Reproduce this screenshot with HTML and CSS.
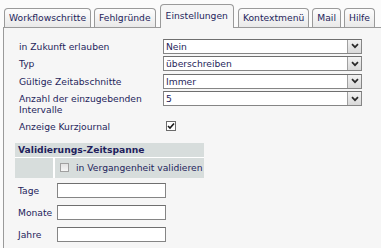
FILE: index.html
```html
<!DOCTYPE html>
<html lang="de">
<head>
    <meta charset="UTF-8">
    <title>Einstellungen</title>
    <link rel="stylesheet" href="styles.css">
</head>
<body>
    <div class="tabs">
        <div class="tab">Workflowschritte</div>
        <div class="tab">Fehlgründe</div>
        <div class="tab active">Einstellungen</div>
        <div class="tab">Kontextmenü</div>
        <div class="tab">Mail</div>
        <div class="tab">Hilfe</div>
    </div>

    <div class="panel">
        <div class="settings">
            <div class="label">in Zukunft erlauben</div>
            <div class="select">
                <span class="value">Nein</span>
                <span class="arrow"><svg width="8" height="6" viewBox="0 0 8 6"><path d="M1 1.2 L4 4.2 L7 1.2" fill="none" stroke="#2a2a2a" stroke-width="1.7"/></svg></span>
            </div>

            <div class="label">Typ</div>
            <div class="select">
                <span class="value">überschreiben</span>
                <span class="arrow"><svg width="8" height="6" viewBox="0 0 8 6"><path d="M1 1.2 L4 4.2 L7 1.2" fill="none" stroke="#2a2a2a" stroke-width="1.7"/></svg></span>
            </div>

            <div class="label">Gültige Zeitabschnitte</div>
            <div class="select">
                <span class="value">Immer</span>
                <span class="arrow"><svg width="8" height="6" viewBox="0 0 8 6"><path d="M1 1.2 L4 4.2 L7 1.2" fill="none" stroke="#2a2a2a" stroke-width="1.7"/></svg></span>
            </div>

            <div class="label">Anzahl der einzugebenden Intervalle</div>
            <div class="select">
                <span class="value">5</span>
                <span class="arrow"><svg width="8" height="6" viewBox="0 0 8 6"><path d="M1 1.2 L4 4.2 L7 1.2" fill="none" stroke="#2a2a2a" stroke-width="1.7"/></svg></span>
            </div>

            <div class="label last">Anzeige Kurzjournal</div>
            <div class="check-cell last">
                <span class="checkbox"><svg width="8" height="8" viewBox="0 0 8 8"><path d="M1 4 L3 6 L7 1.5" fill="none" stroke="#1a1a1a" stroke-width="1.6"/></svg></span>
            </div>
        </div>

        <table class="range">
            <tr>
                <th colspan="2">Validierungs-Zeitspanne</th>
            </tr>
            <tr class="sub">
                <td class="first"></td>
                <td><span class="checkbox disabled"></span>in Vergangenheit validieren</td>
            </tr>
            <tr class="field">
                <td class="first">Tage</td>
                <td><input type="text"></td>
            </tr>
            <tr class="field">
                <td class="first">Monate</td>
                <td><input type="text"></td>
            </tr>
            <tr class="field">
                <td class="first">Jahre</td>
                <td><input type="text"></td>
            </tr>
        </table>
    </div>
</body>
</html>
```

FILE: styles.css
```css
:root {
    --text-color: #1f1f5c;
    --border-color: #9a9a9a;
    --panel-bg: #f6f6f6;
    --head-bg: #d7dddc;
}

* {
    margin: 0;
    padding: 0;
    box-sizing: border-box;
}

body {
    background-color: #fbfbfb;
    color: var(--text-color);
    font-family: 'DejaVu Sans', Verdana, sans-serif;
    font-size: 9.2px;
    line-height: 11px;
    overflow: hidden;
}

/* Tabs */
.tabs {
    display: flex;
    align-items: flex-end;
    gap: 3px;
    height: 28px;
    margin-left: 4px;
    position: relative;
    z-index: 1;
}

.tab {
    height: 19px;
    padding: 3px 4px 0;
    border: 1px solid var(--border-color);
    border-bottom: none;
    border-radius: 4px 4px 0 0;
    background: linear-gradient(#fdfdfd, #e9e9e9);
    margin-bottom: 1px;
    white-space: nowrap;
}

.tab.active {
    height: 24px;
    padding: 5px 5px 0;
    margin: 0 1px;
    background: var(--panel-bg);
}

/* Panel */
.panel {
    margin-left: 3px;
    margin-top: -1px;
    height: 230px;
    border-top: 1px solid var(--border-color);
    border-left: 1px solid var(--border-color);
    background-color: var(--panel-bg);
}

.settings {
    display: grid;
    grid-template-columns: 144px 199px;
    row-gap: 2.5px;
    margin: 10.5px 0 0 15px;
}

.label {
    padding-top: 2px;
}

.last {
    margin-top: 1px;
}

.select {
    display: flex;
    align-items: stretch;
    height: 15px;
    border: 1px solid #858585;
    border-top-color: #6f6f6f;
    background: #fff;
}

.select .value {
    flex: 1;
    padding: 1px 0 0 2px;
}

.select .arrow {
    width: 14px;
    display: flex;
    align-items: center;
    justify-content: center;
    border-left: 1px solid #a0a0a0;
    background: linear-gradient(#f2f2f2, #d9d9d9);
}

.check-cell {
    display: flex;
    align-items: center;
    height: 15px;
    padding-left: 3px;
}

.checkbox {
    display: inline-flex;
    align-items: center;
    justify-content: center;
    width: 10px;
    height: 10px;
    border: 1px solid #6b6b6b;
    background: #fff;
}

.checkbox.disabled {
    width: 9px;
    height: 9px;
    border-color: #a0a0a0;
    background: linear-gradient(#e2e2e2, #f6f6f6);
    vertical-align: -1px;
    margin: 0 7px 0 5px;
}

/* Validation range */
.range {
    margin: 9px 0 0 11px;
    border-collapse: separate;
    border-spacing: 0;
    width: 189px;
}

.range th {
    height: 15px;
    padding: 0 3px;
    text-align: left;
    background: var(--head-bg);
    border-bottom: 1px solid #fff;
}

.range .sub td {
    height: 20px;
    background: var(--head-bg);
    vertical-align: middle;
}

.range td.first {
    width: 40px;
    padding-left: 3px;
    border-right: 2px solid #fff;
}

.range .field td {
    padding: 5px 0 2px;
    vertical-align: middle;
}

.range .field td.first {
    padding-left: 3px;
    border-right: 2px solid transparent;
}

.range .field input {
    display: block;
    width: 109px;
    height: 15px;
    margin-left: 2px;
    border: 1px solid #858585;
    border-top-color: #6f6f6f;
    background: #fff;
}
```
